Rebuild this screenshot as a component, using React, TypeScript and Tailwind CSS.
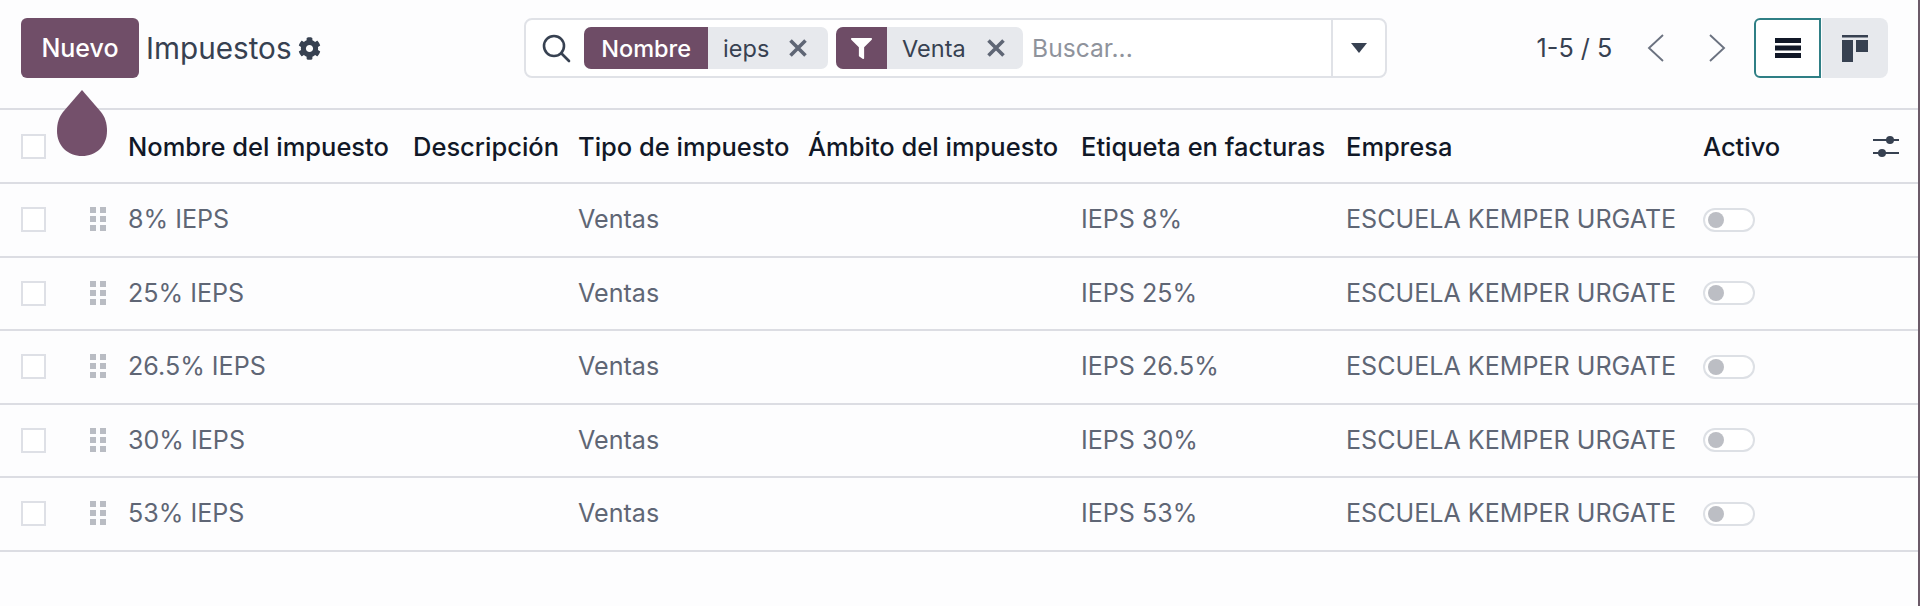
import React from "react";
import { FaCog, FaFilter } from "react-icons/fa";

const cols = "grid grid-cols-[107px_285px_165px_230px_273px_265px_357px_1fr_45px]";

const Checkbox = () => <span className="block h-[25px] w-[25px] border-2 border-[#dee0e6] bg-white" />;

const Grip = () => (
  <svg width="16" height="25" viewBox="0 0 16 25" className="fill-[#b9bcc3]">
    {[0, 9, 18].map((y) => (
      <g key={y}>
        <rect x="0" y={y} width="6" height="6" />
        <rect x="10" y={y} width="6" height="6" />
      </g>
    ))}
  </svg>
);

const Toggle = () => (
  <span className="flex h-[24px] w-[52px] items-center rounded-full border-2 border-[#dde0e5] bg-white pl-[3px]">
    <span className="h-[16px] w-[16px] rounded-full bg-[#bcbec4]" />
  </span>
);

const Close = () => (
  <svg width="18" height="18" viewBox="0 0 18 18" className="stroke-[#5f6675]" strokeWidth="3.6">
    <path d="M1.5 1.5 L16.5 16.5 M16.5 1.5 L1.5 16.5" />
  </svg>
);

const rows = [
  ["8% IEPS", "IEPS 8%"],
  ["25% IEPS", "IEPS 25%"],
  ["26.5% IEPS", "IEPS 26.5%"],
  ["30% IEPS", "IEPS 30%"],
  ["53% IEPS", "IEPS 53%"],
];

const headers = [
  "Nombre del impuesto",
  "Descripción",
  "Tipo de impuesto",
  "Ámbito del impuesto",
  "Etiqueta en facturas",
  "Empresa",
  "Activo",
];

export default function App() {
  return (
    <div className="relative h-[606px] w-[1920px] overflow-hidden bg-[#fdfdfe] font-['Inter',sans-serif]">
      <div className="flex h-[108px] items-start pt-[18px] pl-[21px]">
        <button className="h-[60px] w-[118px] rounded-[6px] bg-[#704e68] pt-[2px] text-[25px] font-medium text-white">Nuevo</button>
        <span className="ml-[7px] mt-[12px] text-[29.7px] leading-[36px] text-[#374151]">Impuestos</span>
        <FaCog className="ml-[6px] mt-[19px] h-[23px] w-[23px] text-[#374151]" />

        <div className="ml-[203px] flex h-[60px] w-[863px] items-center rounded-[8px] border-2 border-[#e0e2e7] bg-white">
          <svg width="30" height="30" viewBox="0 0 30 30" fill="none" className="ml-[15px] stroke-[#374151]" strokeWidth="2.6" strokeLinecap="round">
            <circle cx="13" cy="13" r="10" />
            <path d="M20.5 20.5 L28 28" />
          </svg>
          <div className="ml-[13.5px] flex h-[42px] items-center overflow-hidden rounded-[7px] bg-[#e7e9ed]">
            <span className="flex h-full w-[124px] items-center justify-center bg-[#6e4c66] pt-[1px] text-[23.5px] font-medium text-white">Nombre</span>
            <span className="ml-[15px] w-[50px] pt-[1px] text-[23.5px] text-[#374151]">ieps</span>
            <span className="ml-[16px] mr-[21px]"><Close /></span>
          </div>
          <div className="ml-[8px] flex h-[42px] items-center overflow-hidden rounded-[7px] bg-[#e7e9ed]">
            <span className="flex h-full w-[51px] items-center justify-center bg-[#6e4c66]">
              <FaFilter className="h-[21px] w-[21px] text-white" />
            </span>
            <span className="ml-[15px] w-[67px] pt-[1px] text-[23.5px] text-[#374151]">Venta</span>
            <span className="ml-[18px] mr-[18px]"><Close /></span>
          </div>
          <span className="ml-[9px] flex-1 pt-[1px] text-[24.6px] text-[#8f939c]">Buscar...</span>
          <div className="flex h-full w-[54px] items-center justify-center border-l-2 border-[#e0e2e7]">
            <svg width="16" height="10" viewBox="0 0 16 10" className="fill-[#374151]">
              <path d="M0 0 H16 L8 10 Z" />
            </svg>
          </div>
        </div>

        <span className="ml-[150px] mt-[14px] text-[25.2px] leading-[32px] text-[#374151]">1-5 / 5</span>
        <svg width="18" height="28" viewBox="0 0 18 28" fill="none" className="ml-[35px] mt-[16px] stroke-[#6b7280]" strokeWidth="1.9">
          <path d="M16 1 L2 14 L16 27" />
        </svg>
        <svg width="18" height="28" viewBox="0 0 18 28" fill="none" className="ml-[43px] mt-[16px] stroke-[#6b7280]" strokeWidth="1.9">
          <path d="M2 1 L16 14 L2 27" />
        </svg>
        <div className="ml-[28px] flex">
          <div className="flex h-[60px] w-[67px] items-center justify-center rounded-l-[6px] border-2 border-[#2f7f85] bg-white">
            <svg width="26" height="20" viewBox="0 0 26 20" className="fill-[#111827]">
              <rect y="0" width="26" height="5" />
              <rect y="7.5" width="26" height="5" />
              <rect y="15" width="26" height="5" />
            </svg>
          </div>
          <div className="ml-[1px] flex h-[60px] w-[66px] items-center justify-center rounded-r-[8px] bg-[#e7e9ed]">
            <svg width="26" height="27" viewBox="0 0 26 27" className="fill-[#374151]">
              <rect x="0" y="0" width="26" height="2.5" />
              <rect x="0" y="5" width="11" height="22" />
              <rect x="14" y="5" width="12" height="12" />
            </svg>
          </div>
        </div>
      </div>

      <div className="w-[1918px] border-t-2 border-[#dcdde3]">
        <div className={`${cols} h-[74px] items-center border-b-2 border-[#dcdde3] pl-[21px] text-[25.5px] font-medium text-[#111827]`}>
          <Checkbox />
          {headers.map((h) => (
            <span key={h} className="mt-[2px] whitespace-nowrap">{h}</span>
          ))}
          <svg width="26" height="22" viewBox="0 0 26 22" className="fill-[#374151] stroke-[#374151]">
            <path d="M0 5 H26 M0 18 H26" strokeWidth="2" />
            <circle cx="17" cy="5" r="4" stroke="none" />
            <circle cx="9" cy="18" r="4" stroke="none" />
          </svg>
        </div>
        {rows.map(([name, label]) => (
          <div key={name} className={`${cols} h-[73.5px] items-center border-b-2 border-[#dcdde3] pl-[21px] text-[25.1px] text-[#5f6675]`}>
            <span className="flex items-center">
              <Checkbox />
              <span className="ml-[44px]"><Grip /></span>
            </span>
            <span className="whitespace-nowrap pt-[1px]">{name}</span>
            <span />
            <span className="pt-[1px]">Ventas</span>
            <span />
            <span className="whitespace-nowrap pt-[1px]">{label}</span>
            <span className="whitespace-nowrap pt-[1px]">ESCUELA KEMPER URGATE</span>
            <Toggle />
          </div>
        ))}
      </div>

      <svg width="50" height="68" viewBox="0 0 50 68" className="absolute left-[57px] top-[90px] fill-[#74506b]">
        <path d="M25 0 L44 22 C48 27 50 33 50 41 C50 56 39 66 25 66 C11 66 0 56 0 41 C0 33 2 27 6 22 Z" />
      </svg>

      <div className="absolute right-0 top-0 h-full w-[2px] bg-[#6b5a68]" />
    </div>
  );
}
